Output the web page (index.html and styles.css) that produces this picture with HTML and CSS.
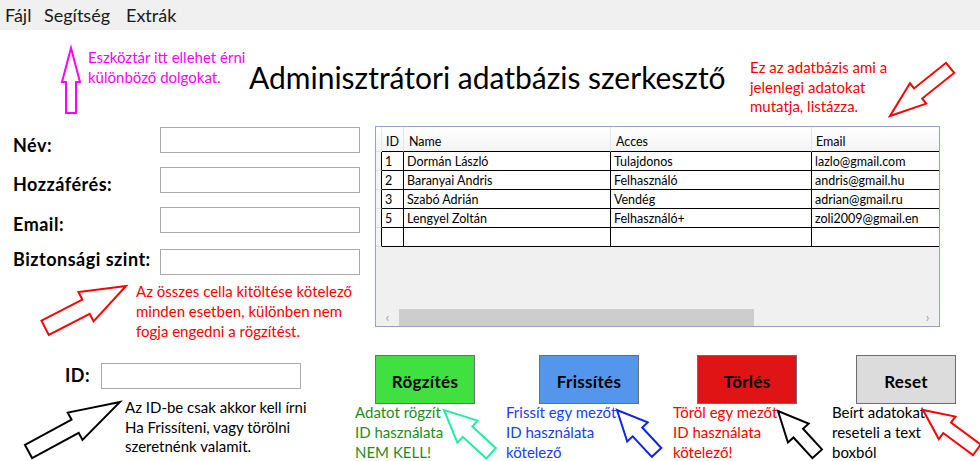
FILE: index.html
```html
<!DOCTYPE html>
<html lang="hu">
<head>
<meta charset="utf-8">
<title>Adminisztrátori adatbázis szerkesztő</title>
<link rel="stylesheet" href="styles.css">
</head>
<body>
<nav class="menubar">
  <span class="mi mi-file">Fájl</span>
  <span class="mi mi-help">Segítség</span>
  <span class="mi">Extrák</span>
</nav>

<header class="top">
  <p class="note note-pink">Eszköztár itt ellehet érni<br>különböző dolgokat.</p>
  <h1 class="title">Adminisztrátori adatbázis szerkesztő</h1>
  <p class="note note-red-top">Ez az adatbázis ami a<br>jelenlegi adatokat<br>mutatja, listázza.</p>
</header>

<main class="mid">
  <section class="form">
    <div class="row row-1"><label class="label">Név:</label><div class="input"></div></div>
    <div class="row row-2"><label class="label">Hozzáférés:</label><div class="input"></div></div>
    <div class="row row-3"><label class="label">Email:</label><div class="input"></div></div>
    <div class="row row-4"><label class="label">Biztonsági szint:</label><div class="input"></div></div>
    <p class="note note-req">Az összes cella kitöltése kötelező<br>minden esetben, különben nem<br>fogja engedni a rögzítést.</p>
  </section>

  <section class="grid">
    <div class="dg">
      <div class="dg-row dg-head">
        <div class="c rh"></div><div class="c">ID</div><div class="c">Name</div><div class="c">Acces</div><div class="c">Email</div>
      </div>
      <div class="dg-row"><div class="c rh"></div><div class="c">1</div><div class="c">Dormán László</div><div class="c">Tulajdonos</div><div class="c">lazlo@gmail.com</div></div>
      <div class="dg-row"><div class="c rh"></div><div class="c">2</div><div class="c">Baranyai Andris</div><div class="c">Felhasználó</div><div class="c">andris@gmail.hu</div></div>
      <div class="dg-row"><div class="c rh"></div><div class="c">3</div><div class="c">Szabó Adrián</div><div class="c">Vendég</div><div class="c">adrian@gmail.ru</div></div>
      <div class="dg-row"><div class="c rh"></div><div class="c">5</div><div class="c">Lengyel Zoltán</div><div class="c">Felhasználó+</div><div class="c">zoli2009@gmail.en</div></div>
      <div class="dg-row"><div class="c rh"></div><div class="c"></div><div class="c"></div><div class="c"></div><div class="c"></div></div>
    </div>
    <div class="hscroll">
      <span class="sb-arrow">&#8249;</span>
      <span class="sb-thumb"></span>
      <span class="sb-track"></span>
      <span class="sb-arrow">&#8250;</span>
    </div>
  </section>
</main>

<section class="bottom">
  <div class="idblock">
    <div class="idrow"><label class="label label-id">ID:</label><div class="input"></div></div>
    <p class="note note-id">Az ID-be csak akkor kell írni<br>Ha Frissíteni, vagy törölni<br>szeretnénk valamit.</p>
  </div>
  <div class="grp grp-1">
    <button class="btn btn-green">Rögzítés</button>
    <p class="note note-btn note-green">Adatot rögzít<br>ID használata<br>NEM KELL!</p>
  </div>
  <div class="grp grp-2">
    <button class="btn btn-blue">Frissítés</button>
    <p class="note note-btn note-blue">Frissít egy mezőt<br>ID használata<br>kötelező</p>
  </div>
  <div class="grp grp-3">
    <button class="btn btn-red">Törlés</button>
    <p class="note note-btn note-red">Töröl egy mezőt<br>ID használata<br>kötelező!</p>
  </div>
  <div class="grp grp-4">
    <button class="btn btn-gray">Reset</button>
    <p class="note note-btn note-black">Beírt adatokat<br>reseteli a text<br>boxból</p>
  </div>
</section>

<svg class="overlay" width="980" height="461" viewBox="0 0 980 461" aria-hidden="true">
  <g fill="#fff" stroke-linejoin="miter">
    <polygon transform="translate(71 48) rotate(-90)" stroke="#ff00ff" stroke-width="2" points="0,0 -34,-9 -34,-5 -65,-5 -65,5 -34,5 -34,9"/>
    <polygon transform="translate(890 116) rotate(141.3)" stroke="#ff0000" stroke-width="2" points="0,0 -36,-13 -36,-6.5 -77,-6.5 -77,6.5 -36,6.5 -36,13"/>
    <polygon transform="translate(126 286) rotate(-27.3)" stroke="#ff0000" stroke-width="2" points="0,0 -45,-16.5 -45,-8 -91,-8 -91,8 -45,8 -45,16.5"/>
    <polygon transform="translate(120 402) rotate(-28.4)" stroke="#000" stroke-width="2" points="0,0 -51,-15.5 -51,-7.5 -104,-7.5 -104,7.5 -51,7.5 -51,15.5"/>
    <polygon transform="translate(444 410) rotate(-137.4)" stroke="#1ef0a0" stroke-width="2" points="0,0 -32,-15 -32,-7 -64,-7 -64,7 -32,7 -32,15"/>
    <polygon transform="translate(617 410) rotate(-133)" stroke="#0a24ee" stroke-width="2" points="0,0 -30,-14 -30,-6.5 -58,-6.5 -58,6.5 -30,6.5 -30,14"/>
    <polygon transform="translate(778 411) rotate(-132.5)" stroke="#000" stroke-width="2" points="0,0 -30,-14 -30,-6.5 -58,-6.5 -58,6.5 -30,6.5 -30,14"/>
    <polygon transform="translate(923 410) rotate(-143.5)" stroke="#ff0000" stroke-width="2" points="0,0 -30,-14 -30,-6.5 -67,-6.5 -67,6.5 -30,6.5 -30,14"/>
  </g>
</svg>
</body>
</html>
```

FILE: styles.css
```css
* { box-sizing: border-box; }

html, body { margin: 0; padding: 0; }

body {
  width: 980px;
  height: 461px;
  overflow: hidden;
  position: relative;
  background: #fff;
  color: #000;
  font-family: Lato, "Open Sans", "Noto Sans", sans-serif;
}

p, h1 { margin: 0; }

/* menu */
.menubar {
  height: 30px;
  background: #f0f0f0;
  display: flex;
  align-items: center;
  padding-left: 5px;
  font-size: 18px;
  color: #1a1a1a;
}
.mi-file { width: 39px; }
.mi-help { width: 82px; }

/* notes */
.note {
  font-size: 15px;
  line-height: 20px;
  white-space: nowrap;
}

/* top area */
.top {
  display: flex;
  align-items: flex-start;
  height: 96px;
  padding-left: 88px;
}
.note-pink {
  color: #ff00ff;
  width: 161px;
  margin-top: 17px;
}
.title {
  width: 501px;
  margin-top: 29px;
  font-size: 30px;
  line-height: 36px;
  font-weight: 400;
  white-space: nowrap;
}
.note-red-top {
  color: #ff0000;
  line-height: 19.5px;
  margin-top: 28px;
}

/* middle */
.mid {
  display: flex;
  align-items: flex-start;
  height: 215px;
}
.form {
  width: 375px;
  padding: 1px 0 0 13px;
}
.row {
  display: flex;
  height: 26px;
  margin-bottom: 14px;
}
.row-3 { margin-bottom: 16px; }
.row-4 { margin-bottom: 0; }

.label {
  width: 147px;
  font-size: 18px;
  line-height: 20px;
  font-weight: 700;
  letter-spacing: 0.5px;
  white-space: nowrap;
}
.row-1 .label { padding-top: 8px; }
.row-2 .label, .row-3 .label { padding-top: 7px; }
.row-4 .label { padding-top: 0; }

.input {
  width: 200px;
  height: 26px;
  border: 1px solid #ababab;
  background: #fff;
}

.note-req {
  color: #ff0000;
  margin: 6px 0 0 123px;
}

/* data grid */
.grid {
  width: 565px;
  height: 201px;
  border: 1px solid #8ea5c6;
  background: #f0f0f0;
  display: flex;
  flex-direction: column;
  overflow: hidden;
}
.dg {
  flex: 1;
  width: 636px;
  font-size: 12.5px;
}
.dg-row {
  display: grid;
  grid-template-columns: 6px 22px 207px 201px 200px;
  height: 19px;
  background: #fff;
}
.c {
  border-right: 1px solid #000;
  border-bottom: 1px solid #000;
  padding: 1px 0 0 3px;
  line-height: 18px;
  white-space: nowrap;
  overflow: hidden;
}
.c.rh {
  background: #f4f4f4;
  border-bottom-color: #e2e2e2;
  padding: 0;
}
.dg-head {
  height: 25px;
  background: linear-gradient(#ffffff, #f3f3f3);
}
.dg-head .c {
  border-right-color: #e4e4e4;
  padding: 6px 0 0 4px;
}
.dg-head .c.rh {
  border-right-color: #e4e4e4;
  background: transparent;
  padding: 0;
}
.dg-head .c:nth-child(3),
.dg-head .c:nth-child(4) { padding-left: 5px; }

.hscroll {
  height: 17px;
  display: flex;
  align-items: stretch;
  background: #f0f0f0;
  color: #a8a8a8;
  font-size: 14px;
}
.sb-arrow {
  width: 23px;
  text-align: center;
  line-height: 16px;
}
.sb-thumb {
  width: 355px;
  background: #cdcdcd;
}
.sb-track { flex: 1; }

/* bottom */
.bottom {
  display: flex;
  align-items: flex-start;
}
.idblock { width: 355px; }
.idrow {
  display: flex;
  margin-top: 22px;
  padding-left: 65px;
}
.label-id {
  width: 36px;
  padding-top: 2px;
}
.note-id {
  margin: 9px 0 0 125px;
  line-height: 19.5px;
}

.grp { margin-top: 14px; }
.grp-1 { width: 151px; }
.grp-2 { width: 167px; }
.grp-3 { width: 159px; }
.grp-1 .btn { margin-left: 20px; }
.grp-2 .btn { margin-left: 33px; }
.grp-3 .btn, .grp-4 .btn { margin-left: 24px; }

.btn {
  display: block;
  width: 100px;
  height: 49px;
  border: 1px solid #6e6e6e;
  padding: 3px 0 0;
  font-family: inherit;
  font-size: 17px;
  font-weight: 700;
  letter-spacing: 0.3px;
  color: #000;
  border-radius: 0;
}
.btn-green { background: #41e041; }
.btn-blue { background: #5596ed; }
.btn-red { background: #e01414; }
.btn-gray { background: #dcdcdc; }

.note-btn { margin-top: -2px; }
.note-green { color: #1f8c1f; }
.note-blue { color: #2040f0; }
.note-red { color: #ff0000; }
.note-black { color: #000; }

/* annotation arrows overlay */
.overlay {
  position: absolute;
  top: 0;
  left: 0;
  pointer-events: none;
}
```
